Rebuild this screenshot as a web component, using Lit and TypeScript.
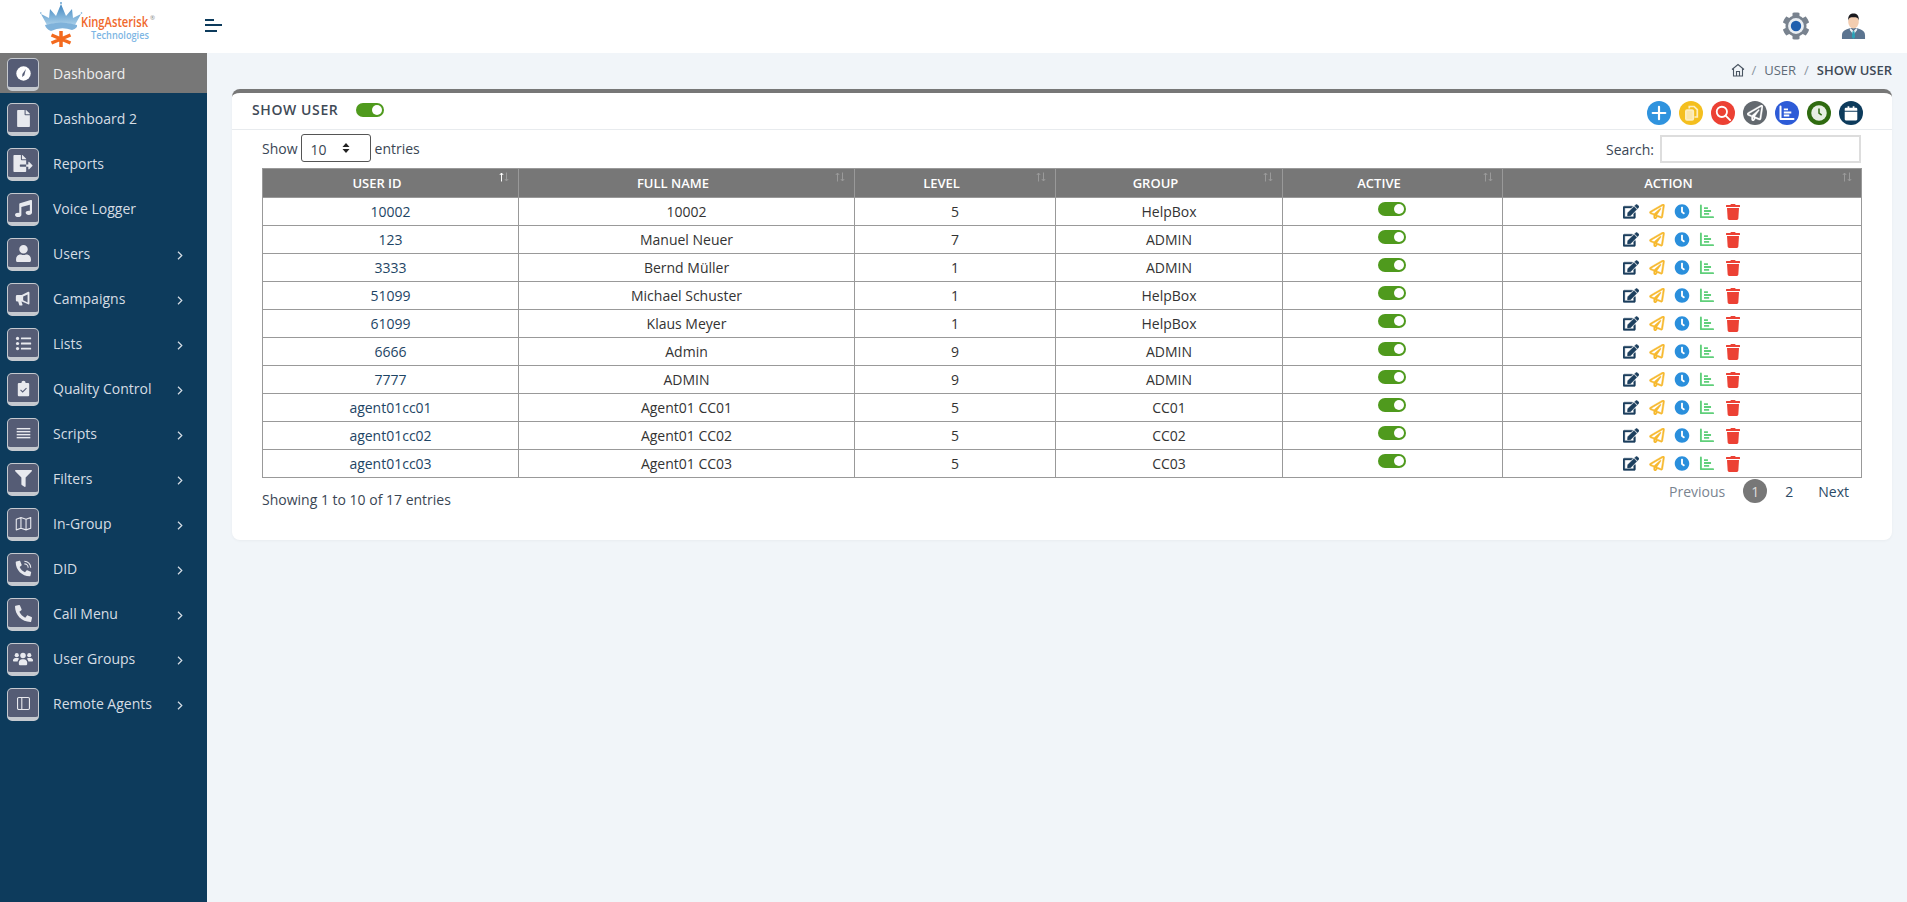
import { LitElement, html, css, svg } from "lit";
import { customElement } from "lit/decorators.js";

const P = {
  plane: "M440 6.5L24 246.4c-34.4 19.9-31.1 70.8 5.7 85.9L144 379.6V464c0 46.4 59.2 65.5 86.6 28.6l43.8-59.1 111.9 46.2c5.9 2.4 12.1 3.6 18.3 3.6 8.2 0 16.3-2.1 23.6-6.2 12.8-7.2 21.6-20 23.9-34.5l59.4-387.2c6.1-40.1-36.9-68.8-71.5-48.9zM192 464v-64.6l36.6 15.1L192 464zm212.6-28.7l-153.8-63.5L391 169.5c10.7-15.5-9.5-33.5-23.7-21.2L155.8 332.6 48 288 464 48l-59.4 387.3z",
  edit: "M402.6 83.2l90.2 90.2c3.8 3.8 3.8 10 0 13.8L274.4 405.6l-92.8 10.3c-12.4 1.4-22.9-9.1-21.5-21.5l10.3-92.8L388.8 83.2c3.8-3.8 10-3.8 13.8 0zm162-22.9l-48.8-48.8c-15.2-15.2-39.9-15.2-55.2 0l-35.4 35.4c-3.8 3.8-3.8 10 0 13.8l90.2 90.2c3.8 3.8 10 3.8 13.8 0l35.4-35.4c15.2-15.3 15.2-40 0-55.2zM384 346.2V448H64V128h229.8c3.2 0 6.2-1.3 8.5-3.5l40-40c7.6-7.6 2.2-20.5-8.5-20.5H48C21.5 64 0 85.5 0 112v352c0 26.5 21.5 48 48 48h352c26.5 0 48-21.5 48-48V306.2c0-10.7-12.9-16-20.5-8.5l-40 40c-2.2 2.3-3.5 5.3-3.5 8.5z",
  trash: "M432 32H312l-9.4-18.7A24 24 0 0 0 281.1 0H166.8a23.72 23.72 0 0 0-21.4 13.3L136 32H16A16 16 0 0 0 0 48v32a16 16 0 0 0 16 16h416a16 16 0 0 0 16-16V48a16 16 0 0 0-16-16zM53.2 467a48 48 0 0 0 47.9 45h245.8a48 48 0 0 0 47.9-45L416 128H32z",
  clock: "M256,8C119,8,8,119,8,256S119,504,256,504,504,393,504,256,393,8,256,8Zm92.49,313h0l-20,25a16,16,0,0,1-22.49,2.5h0l-67-49.72a40,40,0,0,1-15-31.23V112a16,16,0,0,1,16-16h32a16,16,0,0,1,16,16V256l58,42.5A16,16,0,0,1,348.49,321Z",
  file: "M224 136V0H24C10.7 0 0 10.7 0 24v464c0 13.3 10.7 24 24 24h336c13.3 0 24-10.7 24-24V160H248c-13.2 0-24-10.8-24-24zm160-14.1v6.1H256V0h6.1c6.4 0 12.5 2.5 17 7l97.9 98c4.5 4.5 7 10.6 7 16.9z",
  fileExport: "M384 121.9c0-6.3-2.5-12.4-7-16.9L279.1 7c-4.5-4.5-10.6-7-17-7H256v128h128zM571 308l-95.7-96.4c-10.1-10.1-27.4-3-27.4 11.3V288h-64v64h64v65.2c0 14.3 17.3 21.4 27.4 11.3L571 332c6.6-6.6 6.6-17.4 0-24zm-379 28v-32c0-8.8 7.2-16 16-16h176V160H248c-13.2 0-24-10.8-24-24V0H24C10.7 0 0 10.7 0 24v464c0 13.3 10.7 24 24 24h336c13.3 0 24-10.7 24-24V352H208c-8.8 0-16-7.2-16-16z",
  music: "M470.38 1.51L150.41 96A32 32 0 0 0 128 126.51v261.41A139 139 0 0 0 96 384c-53 0-96 28.66-96 64s43 64 96 64 96-28.66 96-64V214.32l256-75v184.61a138.4 138.4 0 0 0-32-3.93c-53 0-96 28.66-96 64s43 64 96 64 96-28.65 96-64V32a32 32 0 0 0-41.62-30.49z",
  user: "M224 256c70.7 0 128-57.3 128-128S294.7 0 224 0 96 57.3 96 128s57.3 128 128 128zm89.6 32h-16.7c-22.2 10.2-46.9 16-72.9 16s-50.6-5.8-72.9-16h-16.7C60.2 288 0 348.2 0 422.4V464c0 26.5 21.5 48 48 48h352c26.5 0 48-21.5 48-48v-41.6c0-74.2-60.2-134.4-134.4-134.4z",
  filter: "M487.976 0H24.028C2.71 0-8.047 25.866 7.058 40.971L192 225.941V432c0 7.831 3.821 15.17 10.237 19.662l80 55.98C298.02 518.69 320 507.493 320 487.98V225.941l184.947-184.97C520.021 25.896 509.338 0 487.976 0z",
  phone: "M493.4 24.6l-104-24c-11.3-2.6-22.9 3.3-27.5 13.9l-48 112c-4.2 9.8-1.4 21.3 6.9 28l60.6 49.6c-36 76.7-98.9 140.5-177.2 177.2l-49.6-60.6c-6.8-8.3-18.2-11.1-28-6.9l-112 48C3.9 366.5-2 378.1.6 389.4l24 104C27.1 504.2 36.7 512 48 512c256.1 0 464-207.5 464-464 0-11.2-7.7-20.9-18.6-23.4z",
  gear: "M487.4 315.7l-42.6-24.6c4.3-23.2 4.3-47 0-70.2l42.6-24.6c4.9-2.8 7.1-8.6 5.5-14-11.1-35.6-30-67.8-54.7-94.6-3.8-4.1-10-5.1-14.8-2.3L380.8 110c-17.9-15.4-38.5-27.3-60.8-35.1V25.8c0-5.6-3.9-10.5-9.4-11.7-36.7-8.2-74.3-7.8-109.2 0-5.5 1.2-9.4 6.1-9.4 11.7V75c-22.2 7.9-42.8 19.8-60.8 35.1L88.7 85.5c-4.9-2.8-11-1.9-14.8 2.3-24.7 26.7-43.6 58.9-54.7 94.6-1.7 5.4.6 11.2 5.5 14L67.3 221c-4.3 23.2-4.3 47 0 70.2l-42.6 24.6c-4.9 2.8-7.1 8.6-5.5 14 11.1 35.6 30 67.8 54.7 94.6 3.8 4.1 10 5.1 14.8 2.3l42.6-24.6c17.9 15.4 38.5 27.3 60.8 35.1v49.2c0 5.6 3.9 10.5 9.4 11.7 36.7 8.2 74.3 7.8 109.2 0 5.5-1.2 9.4-6.1 9.4-11.7v-49.2c22.2-7.9 42.8-19.8 60.8-35.1l42.6 24.6c4.9 2.8 11 1.9 14.8-2.3 24.7-26.7 43.6-58.9 54.7-94.6 1.5-5.5-.7-11.3-5.6-14.1z",
};

const chartBars = svg`<path d="M1.500 1.500v12.500h13" fill="none" stroke="currentColor" stroke-width="2" stroke-linecap="round" stroke-linejoin="round"/><path d="M4.800 3.400h4.200v1.900H4.800zM4.800 6.500h7.500v1.900H4.800zM4.800 9.600h5.500v1.900H4.800z" fill="currentColor"/>`;

const sideIcons: Record<string, unknown> = {
  gauge: html`<svg class="ic" viewBox="0 0 20 20"><circle cx="10" cy="10" r="8.5" fill="#fff"/><path d="M12.8 4.8 L8.7 10.6 L8.4 14 L11 12 Z" fill="#555c75"/></svg>`,
  file: html`<svg class="ic" viewBox="0 0 384 512" fill="#e8e9ee"><path d="${P.file}"/></svg>`,
  fileExport: html`<svg class="ic wide" viewBox="0 0 576 512" fill="#e8e9ee"><path d="${P.fileExport}"/></svg>`,
  music: html`<svg class="ic" viewBox="0 0 512 512" fill="#e8e9ee"><path d="${P.music}"/></svg>`,
  user: html`<svg class="ic" viewBox="0 0 448 512" fill="#e8e9ee"><path d="${P.user}"/></svg>`,
  horn: html`<svg class="ic" viewBox="0 0 20 20" fill="#e8e9ee"><path d="M1 7.5a1.5 1.5 0 0 1 1.5-1.5H8L15.5 2.2a1 1 0 0 1 1.5.9V16a1 1 0 0 1-1.5.8L8 13.5H7.6l1.2 3.7a.8.8 0 0 1-.8 1H5.8a.8.8 0 0 1-.8-.6L3.7 13.500H2.500A1.500 1.500 0 0 1 1 12Z"/><path d="M14.800 5.200 9.600 7.700v4.400l5.200 2.500Z" fill="#555c75"/></svg>`,
  list: html`<svg class="ic" viewBox="0 0 20 20" fill="#e8e9ee"><circle cx="3" cy="4" r="1.900"/><circle cx="3" cy="10" r="1.900"/><circle cx="3" cy="16" r="1.900"/><rect x="7" y="2.900" width="12" height="2.200" rx=".6"/><rect x="7" y="8.900" width="12" height="2.200" rx=".6"/><rect x="7" y="14.900" width="12" height="2.200" rx=".6"/></svg>`,
  clip: html`<svg class="ic" viewBox="0 0 20 20"><path d="M4.500 3.500h3a2.500 2.500 0 0 1 5 0h3a1.200 1.200 0 0 1 1.200 1.200v13.100a1.200 1.200 0 0 1-1.200 1.200h-11a1.200 1.200 0 0 1-1.200-1.200V4.700a1.200 1.200 0 0 1 1.200-1.200Z" fill="#e8e9ee"/><path d="M6.500 11.500l2.500 2.500 4.500-4.500" fill="none" stroke="#555c75" stroke-width="1.300"/></svg>`,
  lines: html`<svg class="ic" viewBox="0 0 20 20" fill="#e8e9ee"><rect x="2" y="3.500" width="16" height="1.700"/><rect x="2" y="7" width="16" height="1.700"/><rect x="2" y="10.500" width="16" height="1.700"/><rect x="2" y="14" width="16" height="1.700"/></svg>`,
  filter: html`<svg class="ic" viewBox="0 0 512 512" fill="#e8e9ee"><path d="${P.filter}"/></svg>`,
  map: html`<svg class="ic" viewBox="0 0 20 20" fill="none" stroke="#e8e9ee" stroke-width="1.300" stroke-linejoin="round"><path d="M1.500 5 7 3l6 2 5.500-2v12.500L13 17.500l-6-2-5.500 2ZM7 3v12.500M13 5v12.500"/></svg>`,
  phoneVol: html`<svg class="ic" viewBox="0 0 20 20"><g transform="translate(19 1) scale(-1 1) scale(.0355)" fill="#e8e9ee"><path d="${P.phone}"/></g><path d="M11 1.500a7.500 7.500 0 0 1 7.500 7.500M11 4.500a4.500 4.500 0 0 1 4.500 4.500" fill="none" stroke="#e8e9ee" stroke-width="1.300"/></svg>`,
  phone: html`<svg class="ic" viewBox="0 0 512 512" fill="#e8e9ee"><path transform="translate(512 0) scale(-1 1)" d="${P.phone}"/></svg>`,
  users: html`<svg class="ic wide" viewBox="0 0 24 20" fill="#e8e9ee"><circle cx="4.500" cy="6" r="2.500"/><circle cx="19.500" cy="6" r="2.500"/><circle cx="12" cy="6.500" r="3.300"/><path d="M0 13a3 3 0 0 1 3-3.500h3a4 4 0 0 1 1.200 1A5 5 0 0 0 5.500 13.500H1a1 1 0 0 1-1-.5ZM24 13a3 3 0 0 0-3-3.500h-3a4 4 0 0 0-1.200 1 5 5 0 0 1 1.700 3H23a1 1 0 0 0 1-.5ZM7 15.500a4 4 0 0 1 4-4.500h2a4 4 0 0 1 4 4.500V17a1 1 0 0 1-1 1H8a1 1 0 0 1-1-1Z"/></svg>`,
  panel: html`<svg class="ic" viewBox="0 0 20 20" fill="none" stroke="#e8e9ee" stroke-width="1.300"><rect x="3" y="3" width="14" height="14" rx="1.500"/><path d="M8 3v14"/></svg>`,
};

const MENU: [string, string, boolean][] = [
  ["Dashboard", "gauge", false],
  ["Dashboard 2", "file", false],
  ["Reports", "fileExport", false],
  ["Voice Logger", "music", false],
  ["Users", "user", true],
  ["Campaigns", "horn", true],
  ["Lists", "list", true],
  ["Quality Control", "clip", true],
  ["Scripts", "lines", true],
  ["Filters", "filter", true],
  ["In-Group", "map", true],
  ["DID", "phoneVol", true],
  ["Call Menu", "phone", true],
  ["User Groups", "users", true],
  ["Remote Agents", "panel", true],
];

const ROWS = [
  ["10002", "10002", "5", "HelpBox"],
  ["123", "Manuel Neuer", "7", "ADMIN"],
  ["3333", "Bernd Müller", "1", "ADMIN"],
  ["51099", "Michael Schuster", "1", "HelpBox"],
  ["61099", "Klaus Meyer", "1", "HelpBox"],
  ["6666", "Admin", "9", "ADMIN"],
  ["7777", "ADMIN", "9", "ADMIN"],
  ["agent01cc01", "Agent01 CC01", "5", "CC01"],
  ["agent01cc02", "Agent01 CC02", "5", "CC02"],
  ["agent01cc03", "Agent01 CC03", "5", "CC03"],
];

const COLS: [string, number][] = [
  ["USER ID", 256],
  ["FULL NAME", 336],
  ["LEVEL", 201],
  ["GROUP", 227],
  ["ACTIVE", 220],
  ["ACTION", 359],
];

@customElement("app-root")
export class AppRoot extends LitElement {
  static styles = css`
    :host { display: block; height: 100vh; font-family: "Open Sans", "Liberation Sans", sans-serif; font-size: 14px; color: #3a4654; background: #f1f5f9; overflow: hidden; }
    * { box-sizing: border-box; }
    .top { height: 53px; background: #fff; display: flex; align-items: center; padding: 0 41px 0 40px; }
    .logo { width: 116px; height: 53px; display: block; }
    .burger { width: 17px; height: 13px; margin: -3px 0 0 49px; display: flex; flex-direction: column; justify-content: space-between; align-items: flex-start; }
    .burger i { display: block; height: 2px; background: #0d3b5c; }
    .burger i:nth-child(1) { width: 9px; } .burger i:nth-child(2) { width: 17px; } .burger i:nth-child(3) { width: 12px; }
    .spacer { flex: 1; }
    .gear { width: 28px; height: 28px; display: block; margin: -2px 31px 0 0; }
    .avatar { width: 25px; height: 26px; display: block; margin-top: -2px; }
    .body { display: flex; height: calc(100% - 53px); }
    .side { width: 207px; flex: none; background: #0d3b5c; }
    .item { height: 45px; display: flex; align-items: flex-start; padding: 5px 0 0 7px; color: #d6dde4; font-size: 14px; }
    .item:first-child { background: linear-gradient(#777 40px, transparent 40px); color: #eee; }
    .tile { width: 32px; height: 33px; flex: none; background: #555c75; border: 1px solid #c5c9cf; border-bottom: 4px solid #c5c9cf; border-radius: 5px; display: flex; align-items: center; justify-content: center; }
    .ic { width: 17px; height: 17px; display: block; }
    .ic.wide { width: 20px; }
    .label { margin-left: 14px; flex: 1; line-height: 22px; margin-top: 5px; }
    .chev { width: 6px; height: 9px; margin: 13px 24px 0 0; display: block; }
    .main { flex: 1; min-width: 0; padding: 0 15px 0 25px; }
    .crumbs { height: 36px; padding-bottom: 2px; display: flex; align-items: center; justify-content: flex-end; gap: 8px; font-size: 13px; color: #5f6b78; }
    .crumbs b { font-weight: 600; color: #3f4a56; }
    .crumbs span { color: #8a94a0; }
    .home { width: 14px; height: 14px; display: block; margin-right: -2px; }
    .card { background: #fff; border-top: 4px solid #777; border-radius: 8px; height: 451px; box-shadow: 0 1px 3px rgba(0,0,0,.04); }
    .head { height: 37px; border-bottom: 1px solid #e8ebee; display: flex; align-items: center; padding: 0 29px 0 20px; }
    .title { font-size: 14px; font-weight: 600; letter-spacing: .6px; color: #3f4a56; margin: -3px 18px 0 0; }
    .tog { width: 28px; height: 14px; border-radius: 7px; background: #4f9a1d; position: relative; display: block; flex: none; }
    .head > .tog { margin-top: -3px; }
    .tog::after { content: ""; position: absolute; right: 2px; top: 2px; width: 10px; height: 10px; border-radius: 50%; background: #fff; }
    .tools { margin: 3px 0 0 auto; display: flex; gap: 8px; }
    .tb { width: 24px; height: 24px; border-radius: 50%; display: flex; align-items: center; justify-content: center; color: #fff; }
    .tb svg { width: 16px; height: 16px; display: block; }
    .wrap { padding: 0 31px 0 30px; }
    .controls { height: 38px; display: flex; align-items: center; justify-content: space-between; font-size: 14px; }
    .len { display: flex; align-items: center; gap: 3px; margin-top: -2px; }
    .sel { width: 70px; height: 28px; border: 1px solid #555; border-radius: 3px; display: flex; align-items: center; justify-content: space-between; padding: 3px 20px 0 9px; margin-right: 1px; font-size: 14px; }
    .sel svg { width: 8px; height: 12px; display: block; margin-top: -3px; }
    .srch { display: flex; align-items: center; gap: 6px; }
    .srch i { display: block; width: 201px; height: 28px; border: 2px solid #ddd; background: #fff; }
    table { border-collapse: collapse; table-layout: fixed; width: 1599px; }
    th { height: 29px; background: #777; color: #fff; font-size: 13px; font-weight: 600; border: 1px solid #999; padding: 0 27px 0 0; text-align: center; position: relative; }
    .sort { position: absolute; right: 9px; top: 3px; width: 10px; height: 10px; display: block; fill: none; stroke: #9a9a9a; stroke-width: 1; }
    th:first-child .up { stroke: #fff; }
    td { height: 28px; border: 1px solid #999; padding: 0; text-align: center; color: #333; font-size: 14px; background: #fff; }
    td:first-child { color: #1e4565; }
    td .tog { margin: -6px auto 0; left: -1px; }
    .acts { display: flex; justify-content: center; align-items: center; gap: 9.4px; }
    .acts svg { display: block; height: 15px; width: 16px; }
    .acts .tr { height: 16px; }
    .foot { display: flex; justify-content: space-between; align-items: flex-start; }
    .info { margin-top: 12px; }
    .pag { display: flex; align-items: center; margin: 1px 12px 0 0; }
    .pag span { color: #7a8490; margin-right: 18px; }
    .pag u { text-decoration: none; width: 24px; height: 24px; border-radius: 50%; background: #777; color: #ddd; display: flex; align-items: center; justify-content: center; margin-right: 18px; }
    .pag a { color: #2b4a66; }
    .pag a.n { margin-left: 25px; }
  `;

  private logo() {
    return html`<svg class="logo" viewBox="0 0 116 53">
      <defs><linearGradient id="cr" x1="0" y1="0" x2="0" y2="1"><stop offset="0" stop-color="#3f86c0"/><stop offset="1" stop-color="#a9cfe9"/></linearGradient></defs>
      <path d="M1 14 L9 18 L10 9 L16 16 L21 4 L26 16 L32 9 L33 18 L41 14 L35 25 Q21 21 7 25 Z" fill="url(#cr)"/>
      <path d="M5 25 Q21 20 37 25 Q38 28 32 30 Q21 26 11 31 Q6 29 5 25Z" fill="#7fb2da"/>
      <circle cx="21" cy="3" r="1" fill="#6ba4d0"/><circle cx="0.800" cy="13" r=".8" fill="#6ba4d0"/><circle cx="41.500" cy="13" r=".8" fill="#6ba4d0"/>
      <g stroke="#f36a1e" stroke-width="3.500"><path d="M21 31v16M11.500 35l19 8M30.500 35l-19 8"/></g>
      <text transform="translate(41 27) scale(.8 1)" font-family="Open Sans" font-size="14" font-weight="600" fill="#f0682c">KingAsterisk</text>
      <text x="110" y="20" font-family="Open Sans" font-size="6" fill="#888">®</text>
      <text transform="translate(51 38.500) scale(.92 1)" font-family="Open Sans" font-size="10" font-weight="600" fill="#7db6e4">Technologies</text>
    </svg>`;
  }

  private avatar() {
    return html`<svg class="avatar" viewBox="0 0 26 27">
      <path d="M1 27v-4c0-3 2-5 5-6l4-1.500h6l4 1.500c3 1 5 3 5 6v4Z" fill="#5b7490"/>
      <path d="M10 15.500l3 3.500 3-3.500 1 2-4 5-4-5Z" fill="#eef2f5"/>
      <path d="M12 19h2l.7 6-1.700 2-1.700-2Z" fill="#2aa3b8"/>
      <ellipse cx="13" cy="9" rx="5.500" ry="7" fill="#f3cdb0"/>
      <path d="M7.500 8C7 2 10 .5 13 .5S19 2 18.500 8C18 5 16 4.500 13 4.500S8 5 7.500 8Z" fill="#1a1a1e"/>
    </svg>`;
  }

  private toolIcon(kind: string) {
    switch (kind) {
      case "plus": return html`<svg viewBox="0 0 14 14"><path d="M7 1.500v11M1.500 7h11" stroke="#fff" stroke-width="1.900" stroke-linecap="round"/></svg>`;
      case "copy": return html`<svg viewBox="0 0 14 14" fill="none" stroke="#fdeec0" stroke-width="1.500"><path d="M5.500 3V1.300h4.200l2.800 2.800V10.500H10"/><rect x="2.500" y="4.500" width="6.500" height="8.500" rx="1" fill="#fbe7ac"/></svg>`;
      case "search": return html`<svg viewBox="0 0 14 14" fill="none" stroke="#fff" stroke-width="1.600"><circle cx="6" cy="6" r="4.500"/><path d="M9.300 9.300l3.900 3.900" stroke-linecap="round"/></svg>`;
      case "plane": return html`<svg viewBox="0 0 512 512" fill="#fff" stroke="#fff" stroke-width="10"><path d="${P.plane}"/></svg>`;
      case "chart": return html`<svg viewBox="0 0 16 16" style="color:#fff">${chartBars}</svg>`;
      case "clock": return html`<svg viewBox="0 0 512 512"><circle cx="256" cy="256" r="248" fill="#e7efe3"/><path d="M232 110h48v140l75 55-28 38-95-70Z" fill="#2f6b10"/></svg>`;
      default: return html`<svg viewBox="0 0 14 14" fill="#fff"><path d="M1.500 5V3.500a1 1 0 0 1 1-1H4V1h1.500v1.500h3V1H10v1.500h1.500a1 1 0 0 1 1 1V5Z"/><path d="M1.500 6h11v6.500a1 1 0 0 1-1 1h-9a1 1 0 0 1-1-1Z"/></svg>`;
    }
  }

  private actions() {
    return html`<div class="acts">
      <svg viewBox="0 0 576 512" fill="#1c3f5e" stroke="#1c3f5e" stroke-width="14"><path d="${P.edit}"/></svg>
      <svg viewBox="0 0 512 512" fill="#f7b92e" stroke="#f7b92e" stroke-width="16"><path d="${P.plane}"/></svg>
      <svg viewBox="0 0 512 512" fill="#2a8fdc"><path d="${P.clock}"/></svg>
      <svg viewBox="0 0 16 16" style="color:#5fcf7a">${chartBars}</svg>
      <svg class="tr" viewBox="0 0 448 512" fill="#ec4134"><path d="${P.trash}"/></svg>
    </div>`;
  }

  render() {
    const tools: [string, string][] = [
      ["plus", "#2f93de"], ["copy", "#f4bf1f"], ["search", "#ec4134"], ["plane", "#63696f"],
      ["chart", "#2d5bd7"], ["clock", "#2f6b10"], ["cal", "#0d3b5c"],
    ];
    return html`
      <div class="top">
        ${this.logo()}
        <div class="burger"><i></i><i></i><i></i></div>
        <div class="spacer"></div>
        <svg class="gear" viewBox="0 0 512 512"><path d="${P.gear}" fill="#78828e"/><circle cx="256" cy="256" r="145" fill="#e9eef3"/><circle cx="256" cy="256" r="95" fill="#1f5fae"/></svg>
        ${this.avatar()}
      </div>
      <div class="body">
        <nav class="side">
          ${MENU.map(([t, i, c]) => html`<div class="item">
            <div class="tile">${sideIcons[i]}</div>
            <div class="label">${t}</div>
            ${c ? html`<svg class="chev" viewBox="0 0 6 9" fill="none" stroke="#d6dde4" stroke-width="1.200"><path d="M1 .8 4.800 4.500 1 8.200"/></svg>` : ""}
          </div>`)}
        </nav>
        <main class="main">
          <div class="crumbs">
            <svg class="home" viewBox="0 0 14 14" fill="none" stroke="#4a5562" stroke-width="1.100"><path d="M1 6.500 7 1.500l6 5M2.500 5.500V13h9V5.500M5.500 13V8.500h3V13"/></svg>
            <span>/</span><div>USER</div><span>/</span><b>SHOW USER</b>
          </div>
          <section class="card">
            <div class="head">
              <div class="title">SHOW USER</div>
              <i class="tog"></i>
              <div class="tools">
                ${tools.map(([k, c]) => html`<div class="tb" style="background:${c}">${this.toolIcon(k)}</div>`)}
              </div>
            </div>
            <div class="wrap">
              <div class="controls">
                <div class="len">Show
                  <div class="sel">10<svg viewBox="0 0 8 12" fill="#222"><path d="M4 1 7.500 5H.5ZM4 11 .5 7h7Z"/></svg></div>
                  entries</div>
                <div class="srch">Search: <i></i></div>
              </div>
              <table>
                <colgroup>${COLS.map(([, w]) => html`<col style="width:${w}px"/>`)}</colgroup>
                <thead><tr>${COLS.map(([n]) => html`<th>${n}<svg class="sort" viewBox="0 0 10 10"><path class="up" d="M2.500 9.500V1M.8 3 2.500 1 4.200 3"/><path d="M7.500.5V9M5.800 7 7.500 9 9.200 7"/></svg></th>`)}</tr></thead>
                <tbody>
                  ${ROWS.map((r) => html`<tr>
                    ${r.map((v) => html`<td>${v}</td>`)}
                    <td><i class="tog"></i></td>
                    <td>${this.actions()}</td>
                  </tr>`)}
                </tbody>
              </table>
              <div class="foot">
                <div class="info">Showing 1 to 10 of 17 entries</div>
                <div class="pag"><span>Previous</span><u>1</u><a>2</a><a class="n">Next</a></div>
              </div>
            </div>
          </section>
        </main>
      </div>
    `;
  }
}
